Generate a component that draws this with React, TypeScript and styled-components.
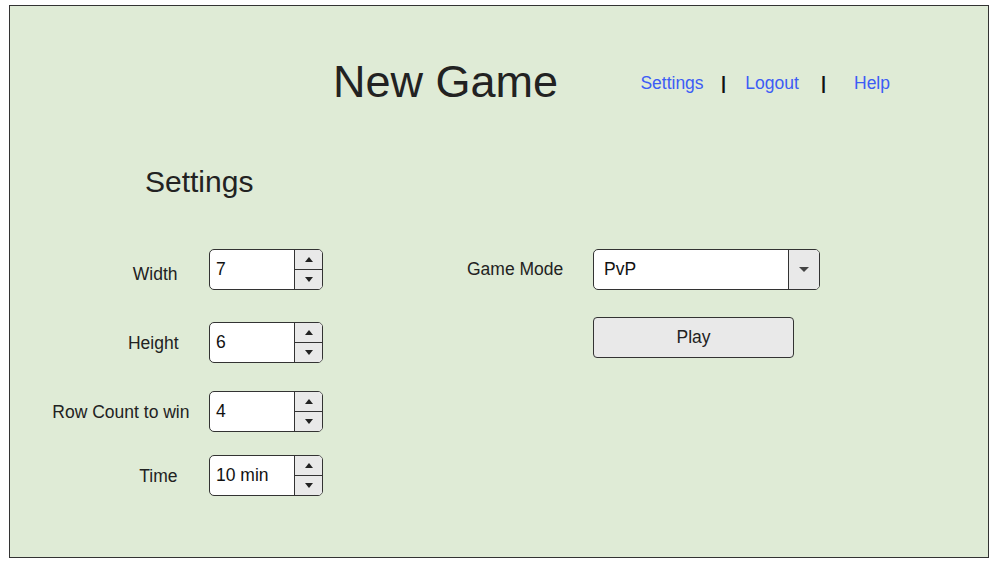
import React from "react";
import styled, { createGlobalStyle } from "styled-components";

const Global = createGlobalStyle`
  html, body { margin: 0; padding: 0; background: #ffffff; }
  body { font-family: "Liberation Sans", Arial, sans-serif; color: #222; }
  * { box-sizing: border-box; }
`;

const Frame = styled.div`
  margin: 5px 0 0 9px;
  width: 980px;
  height: 553px;
  border: 1px solid #333;
  background: #dfebd6;
  display: flex;
  flex-direction: column;
`;

const Header = styled.header`
  display: flex;
  align-items: flex-start;
  padding: 51px 0 0 323px;
  gap: 70px;
`;

const Title = styled.h1`
  margin: 0;
  font-size: 45px;
  line-height: 50px;
  font-weight: 400;
  color: #222;
  width: 229px;
  white-space: nowrap;
`;

const Nav = styled.nav`
  display: flex;
  align-items: center;
  margin-top: 16px;
  font-size: 17.5px;
  line-height: 20px;
`;

const NavLink = styled.a`
  width: 80px;
  text-align: center;
  color: #3c5cf5;
  text-decoration: none;
  cursor: pointer;
`;

const Separator = styled.span`
  width: 20px;
  padding-left: 3px;
  text-align: center;
  font-weight: 700;
  font-size: 18px;
  color: #111;
`;

const SectionTitle = styled.h2`
  margin: 57px 0 0 135px;
  font-size: 30px;
  line-height: 35px;
  font-weight: 400;
  color: #222;
`;

const Form = styled.div`
  display: flex;
  align-items: flex-start;
  margin-top: 50px;
  padding-left: 29px;
  gap: 143px;
`;

const Column = styled.div`
  display: flex;
  flex-direction: column;
`;

const Row = styled.div<{ $top: number }>`
  display: flex;
  align-items: center;
  margin-top: ${(p) => p.$top}px;
`;

const Label = styled.label<{ $pad: number; $dy?: number }>`
  width: 170px;
  text-align: right;
  padding-right: ${(p) => p.$pad}px;
  padding-top: ${(p) => (p.$dy ?? 0) * 2}px;
  font-size: 17.5px;
  line-height: 20px;
  white-space: nowrap;
  color: #222;
`;

const NumberBox = styled.div`
  width: 114px;
  height: 41px;
  display: flex;
  border: 1px solid #333;
  border-radius: 5px;
  background: #fff;
  overflow: hidden;
`;

const Value = styled.div`
  flex: 1;
  display: flex;
  align-items: center;
  padding-left: 6px;
  font-size: 17.5px;
  color: #111;
`;

const Spinner = styled.div`
  width: 28px;
  display: flex;
  flex-direction: column;
  border-left: 1px solid #333;
  background: #e9e9e9;
`;

const SpinButton = styled.div<{ $first?: boolean }>`
  flex: 1;
  display: flex;
  align-items: center;
  justify-content: center;
  border-bottom: ${(p) => (p.$first ? "1px solid #333" : "none")};
`;

const RightGrid = styled.div`
  display: grid;
  grid-template-columns: 97px 226px;
  column-gap: 30px;
  row-gap: 27px;
  align-items: center;
  margin-left: 1px;
`;

const ModeLabel = styled.label`
  font-size: 17.5px;
  line-height: 20px;
  white-space: nowrap;
  color: #222;
  margin-top: -2px;
`;

const SelectBox = styled.div`
  height: 41px;
  display: flex;
  border: 1px solid #333;
  border-radius: 5px;
  background: #fff;
  overflow: hidden;
  margin-left: -1px;
`;

const SelectValue = styled.div`
  flex: 1;
  display: flex;
  align-items: center;
  padding-left: 10px;
  font-size: 17.5px;
  color: #111;
`;

const SelectArrow = styled.div`
  width: 31px;
  border-left: 1px solid #333;
  background: #e9e9e9;
  display: flex;
  align-items: center;
  justify-content: center;
`;

const PlayButton = styled.button`
  grid-column: 2;
  width: 201px;
  height: 41px;
  margin-left: -1px;
  border: 1px solid #333;
  border-radius: 4px;
  background: #e9e9e9;
  font-family: "Liberation Sans", Arial, sans-serif;
  font-size: 17.5px;
  color: #222;
  padding: 0;
  cursor: pointer;
`;

const Up = () => (
  <svg width="8" height="5" viewBox="0 0 8 5">
    <polygon points="0,5 8,5 4,0" fill="#222" />
  </svg>
);
const Down = () => (
  <svg width="8" height="5" viewBox="0 0 8 5">
    <polygon points="0,0 8,0 4,5" fill="#222" />
  </svg>
);
const Caret = () => (
  <svg width="10" height="5" viewBox="0 0 10 5">
    <polygon points="0,0 10,0 5,5" fill="#444" />
  </svg>
);

const NumberInput = ({ value }: { value: string }) => (
  <NumberBox>
    <Value>{value}</Value>
    <Spinner>
      <SpinButton $first>
        <Up />
      </SpinButton>
      <SpinButton>
        <Down />
      </SpinButton>
    </Spinner>
  </NumberBox>
);

const fields = [
  { label: "Width", value: "7", pad: 31.5, top: 0, dy: 4 },
  { label: "Height", value: "6", pad: 30.5, top: 32, dy: 0 },
  { label: "Row Count to win", value: "4", pad: 19.5, top: 28, dy: 0 },
  { label: "Time", value: "10 min", pad: 31.5, top: 23, dy: 0 },
];

export default function App() {
  return (
    <>
      <Global />
      <Frame>
        <Header>
          <Title>New Game</Title>
          <Nav>
            <NavLink>Settings</NavLink>
            <Separator>|</Separator>
            <NavLink>Logout</NavLink>
            <Separator>|</Separator>
            <NavLink>Help</NavLink>
          </Nav>
        </Header>
        <SectionTitle>Settings</SectionTitle>
        <Form>
          <Column>
            {fields.map((f) => (
              <Row key={f.label} $top={f.top}>
                <Label $pad={f.pad} $dy={f.dy}>
                  {f.label}
                </Label>
                <NumberInput value={f.value} />
              </Row>
            ))}
          </Column>
          <RightGrid>
            <ModeLabel>Game Mode</ModeLabel>
            <SelectBox>
              <SelectValue>PvP</SelectValue>
              <SelectArrow>
                <Caret />
              </SelectArrow>
            </SelectBox>
            <PlayButton>Play</PlayButton>
          </RightGrid>
        </Form>
      </Frame>
    </>
  );
}
